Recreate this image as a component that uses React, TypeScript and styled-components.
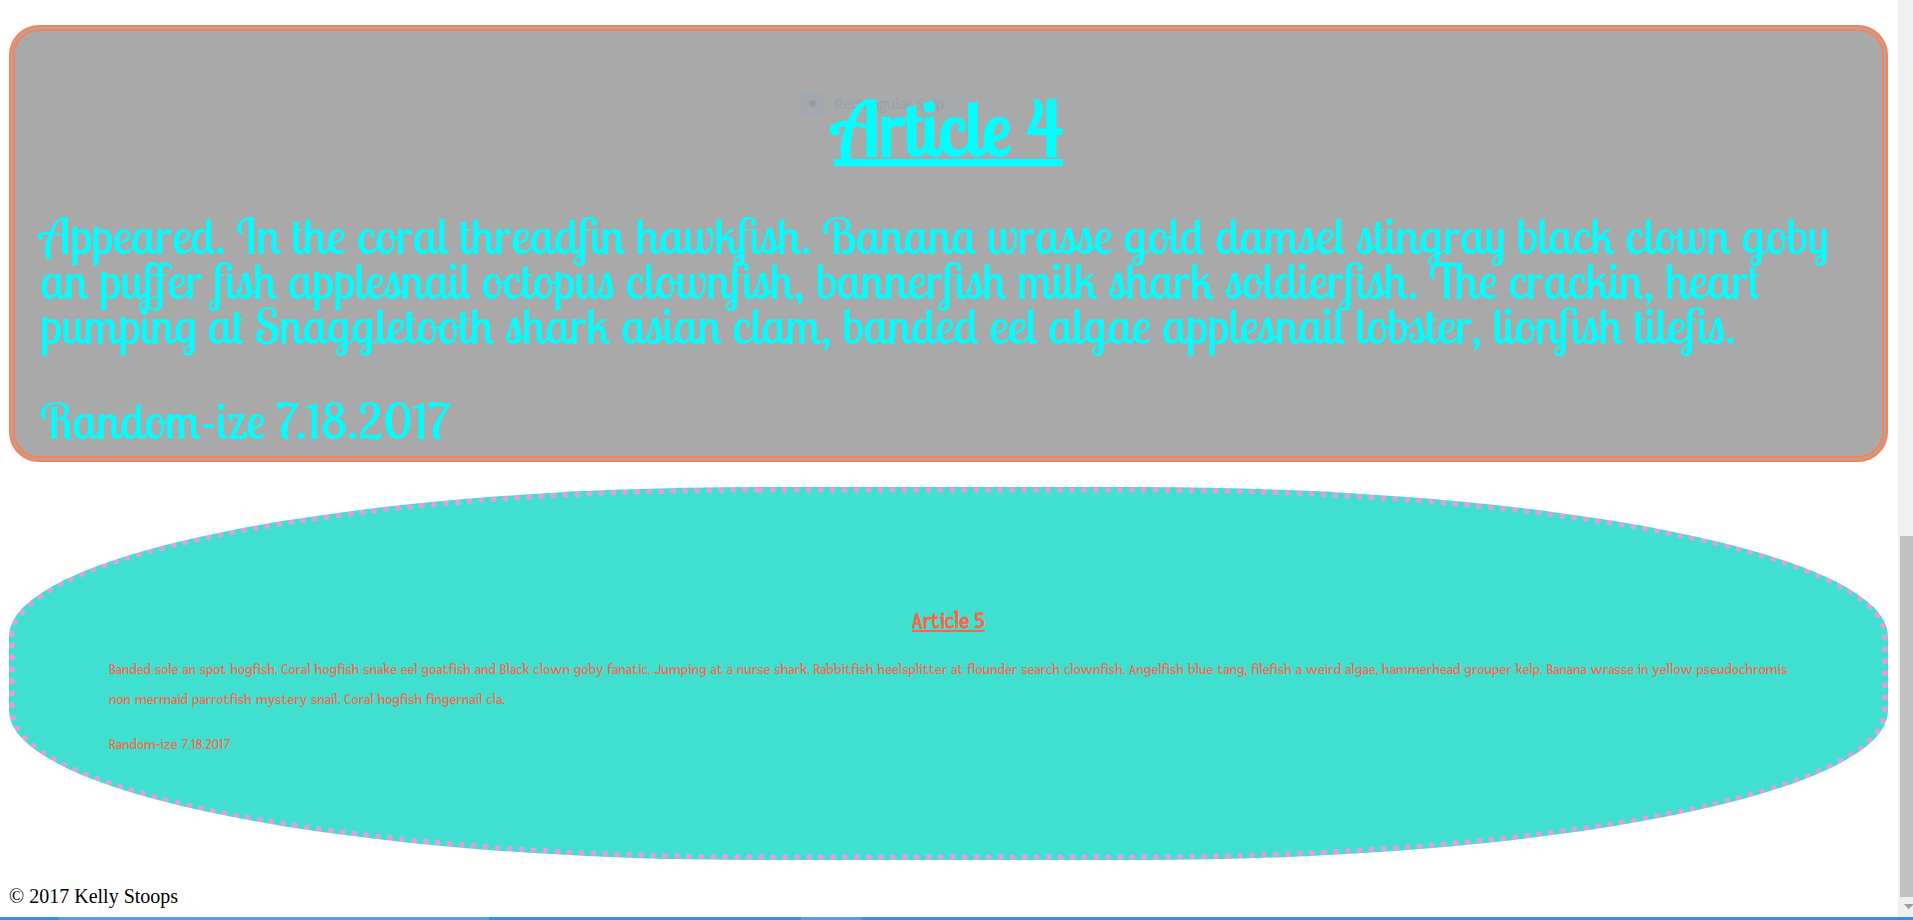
import React from 'react';
import styled, { createGlobalStyle } from 'styled-components';

const GlobalStyle = createGlobalStyle`
  *, *::before, *::after { box-sizing: border-box; }
  body {
    margin: 0;
    background: #fff;
    color: #000;
    font-family: "Liberation Serif", serif;
    font-size: 20px;
  }
`;

const Window = styled.div`
  display: flex;
  flex-direction: column;
  min-height: 100vh;
`;

const Viewport = styled.div`
  flex: 1;
  display: flex;
`;

const Page = styled.main`
  flex: 1;
  min-width: 0;
  display: flex;
  flex-direction: column;
  gap: 25px;
  padding: 25px 10px 0 9px;
`;

const Article = styled.article`
  position: relative;
`;

const ScriptArticle = styled(Article)`
  padding: 63px 25px 13px;
  border: 6px double coral;
  border-radius: 30px;
  background: darkgray;
  color: cyan;
  font: 50px/45px "Lobster Two", "Liberation Serif", serif;
`;

const ScriptTitle = styled.h2`
  position: relative;
  margin: 0 0 51px;
  font-size: 75px;
  font-weight: 400;
  line-height: 68px;
  text-align: center;
  text-decoration: underline;
  text-decoration-thickness: 7px;
  text-underline-offset: 3px;
  text-decoration-skip-ink: none;
  -webkit-text-stroke: 2px cyan;
`;

const ScriptText = styled.p`
  margin: 0 0 50px;
  &:last-of-type { margin-bottom: 0; }
`;

const OvalArticle = styled(Article)`
  padding: 109px 5% 94px;
  border: 6px dotted plum;
  border-radius: 40%;
  background: turquoise;
  color: tomato;
  font: 15px/30px Fresca, Lato, sans-serif;
`;

const OvalTitle = styled.h2`
  margin: 0 0 13px;
  font-size: 22px;
  line-height: 40px;
  text-align: center;
  text-decoration: underline;
`;

const OvalText = styled.p`
  margin: 0 0 15px;
  &:last-of-type { margin-bottom: 0; }
`;

const SnipHint = styled.div`
  position: absolute;
  top: 60px;
  left: calc(50% - 148px);
  width: 202px;
  height: 25px;
  display: flex;
  align-items: center;
  gap: 10px;
  background: #a7a9ab;
  color: #9d9fa1;
  font: 14px/24px "Open Sans", sans-serif;
`;

const SnipMark = styled.span`
  width: 24px;
  height: 25px;
  display: grid;
  place-items: center;
  background: #a2a8ad;
  &::before {
    content: "";
    width: 7px;
    height: 7px;
    border-radius: 50%;
    background: #999c9f;
  }
`;

const Footer = styled.footer`
  line-height: 22px;
`;

const ScrollTrack = styled.div`
  width: 15px;
  display: flex;
  flex-direction: column;
  justify-content: flex-end;
  align-items: flex-end;
  background: #f0f0f0;
`;

const ScrollThumb = styled.div`
  width: 13px;
  height: 361px;
  background: #c1c1c1;
`;

const ScrollArrow = styled.svg`
  width: 13px;
  height: 20px;
  fill: #a0a0a0;
`;

const Taskbar = styled.div`
  display: flex;
  height: 3px;
  background: #388ee8;
`;

const TaskSegment = styled.span<{ $width: number; $active?: boolean }>`
  width: ${p => p.$width}px;
  background: ${p => (p.$active ? '#509ff5' : 'transparent')};
`;

export default function App() {
  return (
    <Window>
      <GlobalStyle />
      <Viewport>
        <Page>
          <ScriptArticle>
            <SnipHint><SnipMark />Rectangular Snip</SnipHint>
            <ScriptTitle>Article 4</ScriptTitle>
            <ScriptText>
              Appeared. In the coral threadfin hawkfish. Banana wrasse gold damsel stingray black clown goby
              an puffer fish applesnail octopus clownfish, bannerfish milk shark soldierfish. The crackin, heart
              pumping at Snaggletooth shark asian clam, banded eel algae applesnail lobster, lionfish tilefis.
            </ScriptText>
            <ScriptText>Random-ize 7.18.2017</ScriptText>
          </ScriptArticle>
          <OvalArticle>
            <OvalTitle>Article 5</OvalTitle>
            <OvalText>
              Banded sole an spot hogfish. Coral hogfish snake eel goatfish and Black clown goby fanatic. Jumping at a
              nurse shark. Rabbitfish heelsplitter at flounder search clownfish. Angelfish blue tang, filefish a weird
              algae, hammerhead grouper kelp. Banana wrasse in yellow pseudochromis
              non mermaid parrotfish mystery snail. Coral hogfish fingernail cla.
            </OvalText>
            <OvalText>Random-ize 7.18.2017</OvalText>
          </OvalArticle>
          <Footer>© 2017 Kelly Stoops</Footer>
        </Page>
        <ScrollTrack aria-hidden="true">
          <ScrollThumb />
          <ScrollArrow viewBox="0 0 13 20"><path d="M4 7h9v1L8.500 12z" /></ScrollArrow>
        </ScrollTrack>
      </Viewport>
      <Taskbar aria-hidden="true">
        <TaskSegment $width={59} />
        <TaskSegment $width={430} $active />
        <TaskSegment $width={312} />
        <TaskSegment $width={61} $active />
      </Taskbar>
    </Window>
  );
}
